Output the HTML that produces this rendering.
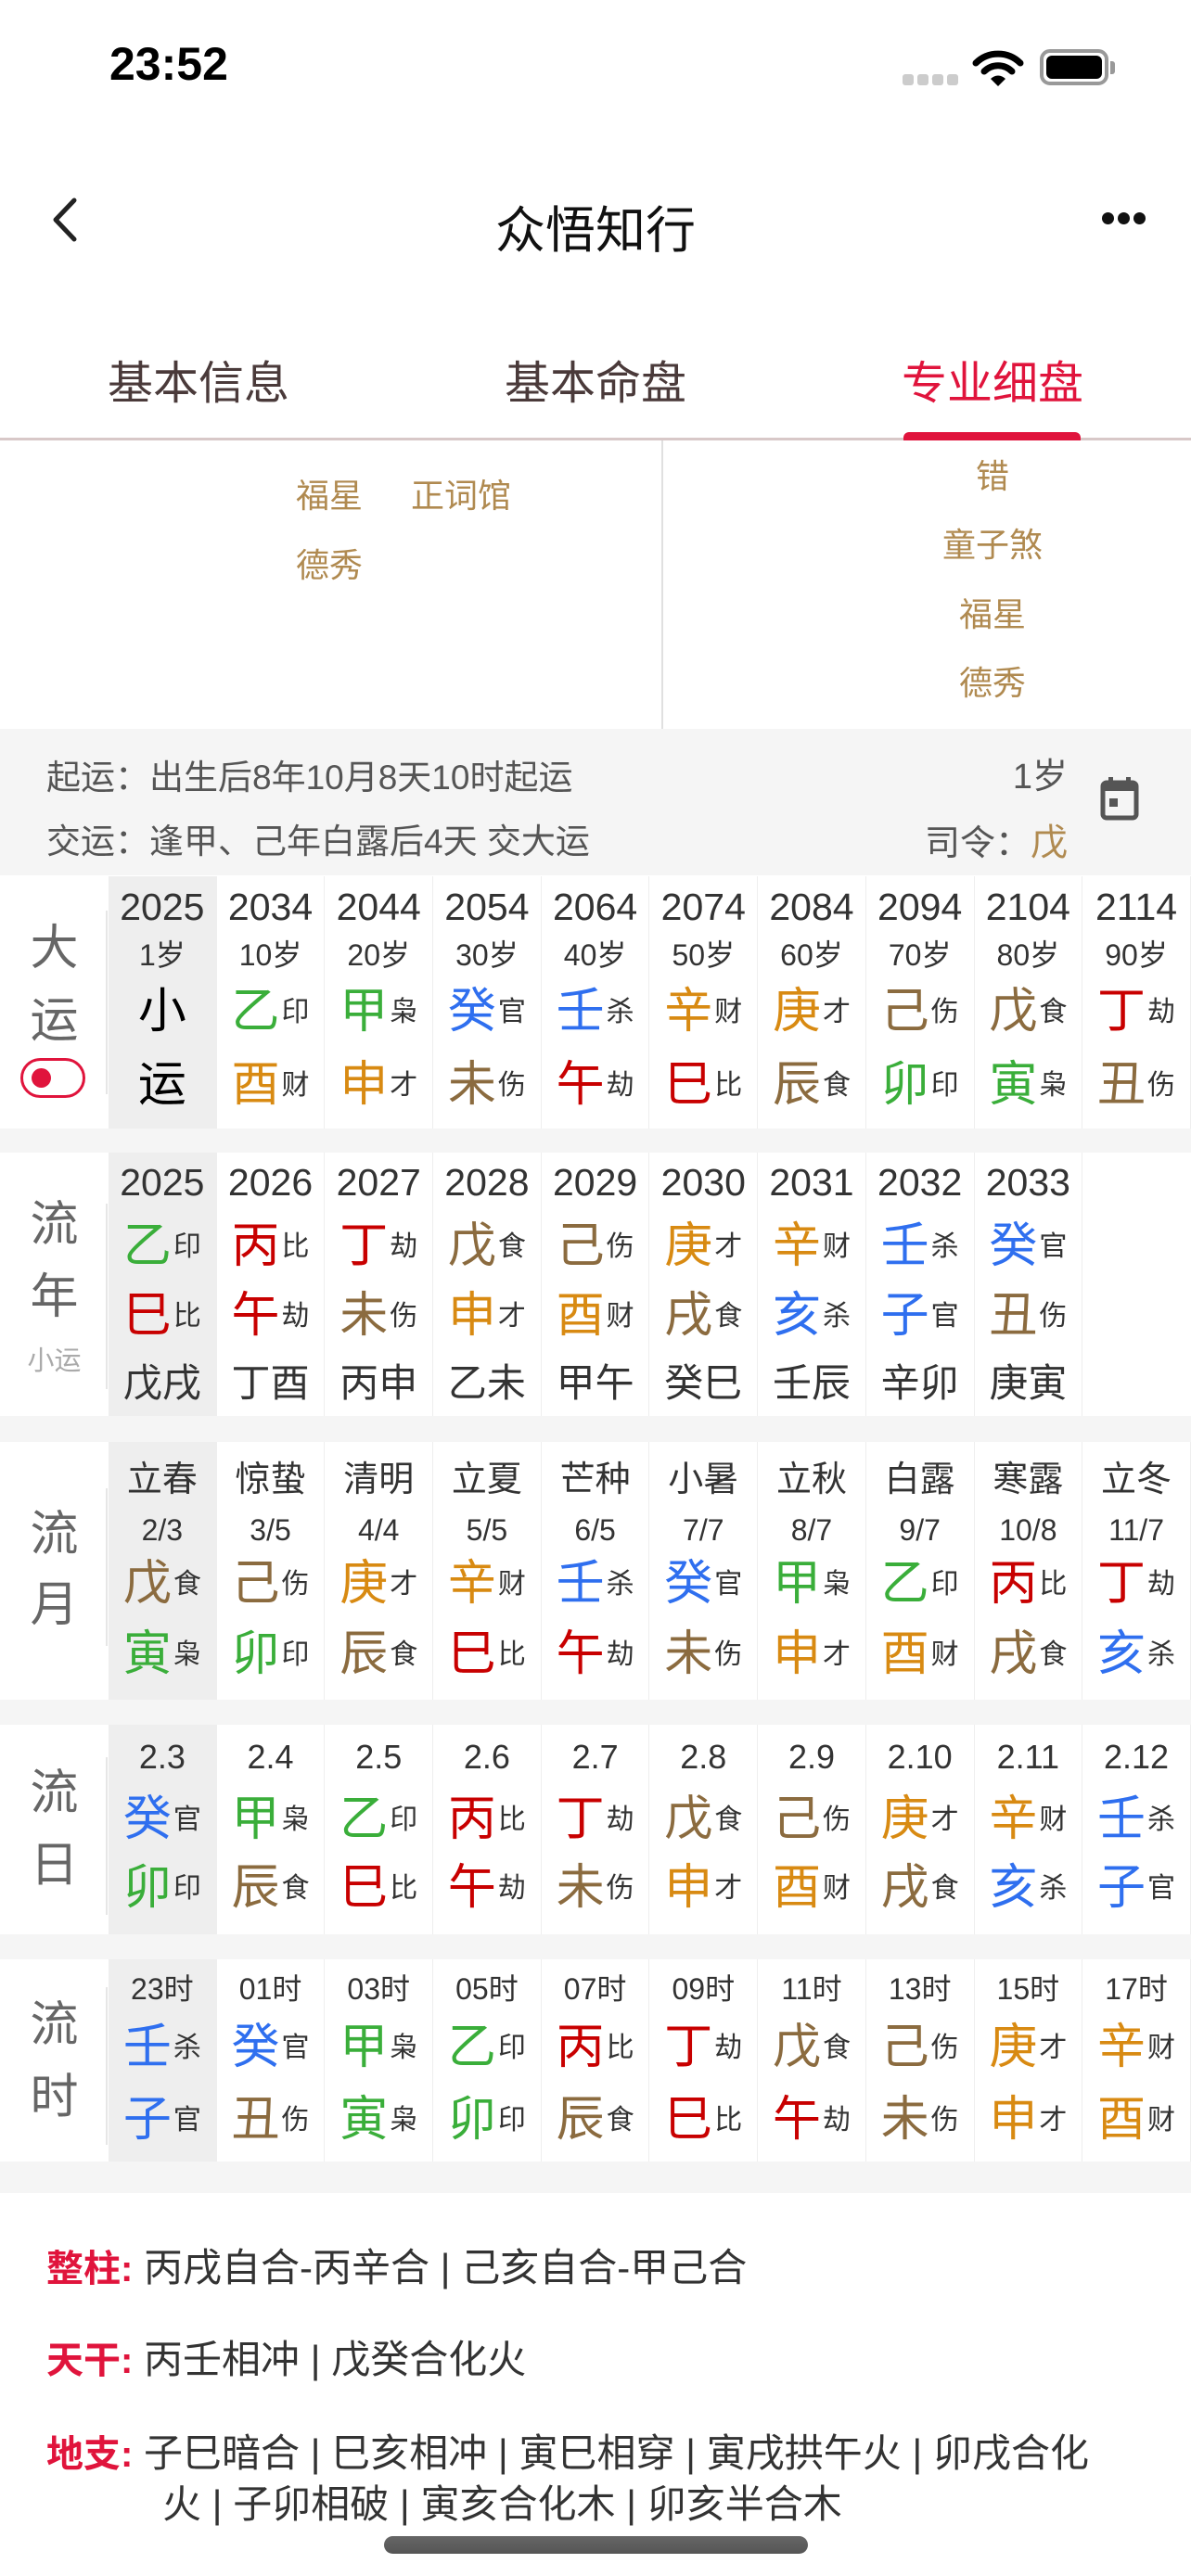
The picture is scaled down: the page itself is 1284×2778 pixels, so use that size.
<!DOCTYPE html>
<html><head><meta charset="utf-8">
<style>
*{margin:0;padding:0;box-sizing:border-box}
body{width:1284px;height:2778px;background:#fff;font-family:"Liberation Sans","Noto Sans CJK SC",sans-serif;position:relative;overflow:hidden;color:#333}
.abs{position:absolute}
.g{color:#3aae3a}.b{color:#2f6fef}.o{color:#d88a12}.n{color:#8b6b3f}.r{color:#c80000}
.blk{position:absolute;left:0;width:1284px;background:#fff}
.lab{position:absolute;left:0;width:117px;top:0;height:100%;color:#666;font-size:52px;text-align:center}
.lab .vl{position:absolute;left:114px;width:2px;background:#e6e6e6}
.cols{position:absolute;left:117px;top:0;height:100%;display:flex}
.c{width:116.7px;height:100%;border-right:1.5px solid #eee;text-align:center;white-space:nowrap;overflow:hidden}
.c > div{overflow:visible}
.c.h{background:#eee}
.y{font-size:41px;color:#333}
.a{font-size:32px;color:#333}
.s{font-size:52px}
.s small{font-size:30px;color:#333;margin-left:2px;line-height:0;position:relative;top:-7px}
.gz{font-size:42px;color:#333}
.jq{font-size:38px;color:#333}
.t{font-size:36px;color:#b08a50;position:absolute}
.gap{position:absolute;left:0;width:1284px;background:#f5f5f5}
.bt{position:absolute;left:50px;font-size:42px;line-height:50px;color:#333;white-space:nowrap}
.bt b{color:#e0143c;font-size:40px}
</style></head><body>

<!-- status bar -->
<div class="abs" style="left:118px;top:40px;font-size:50px;font-weight:bold;color:#000">23:52</div>
<div class="abs" style="left:973px;top:80px;width:12px;height:12px;border-radius:3px;background:#ccc"></div>
<div class="abs" style="left:989px;top:80px;width:12px;height:12px;border-radius:3px;background:#ccc"></div>
<div class="abs" style="left:1005px;top:80px;width:12px;height:12px;border-radius:3px;background:#ccc"></div>
<div class="abs" style="left:1021px;top:80px;width:12px;height:12px;border-radius:3px;background:#ccc"></div>
<svg class="abs" style="left:1048px;top:52px" width="56" height="42" viewBox="0 0 56 42">
<path d="M4 16 A34 34 0 0 1 52 16" fill="none" stroke="#000" stroke-width="7" stroke-linecap="round"/>
<path d="M13 25 A21 21 0 0 1 43 25" fill="none" stroke="#000" stroke-width="7" stroke-linecap="round"/>
<path d="M20 33 L28 41 L36 33 A11 11 0 0 0 20 33Z" fill="#000"/>
</svg>
<div class="abs" style="left:1121px;top:53px;width:74px;height:39px;border:4px solid #999;border-radius:11px"></div>
<div class="abs" style="left:1128px;top:60px;width:60px;height:25px;background:#000;border-radius:6px"></div>
<div class="abs" style="left:1197px;top:66px;width:5px;height:14px;background:#999;border-radius:0 3px 3px 0"></div>

<!-- nav -->
<svg class="abs" style="left:52px;top:212px" width="36" height="50" viewBox="0 0 36 50"><path d="M28 4 L8 25 L28 46" fill="none" stroke="#222" stroke-width="5" stroke-linecap="round" stroke-linejoin="round"/></svg>
<div class="abs" style="left:0;width:1284px;top:204px;text-align:center;font-size:54px;color:#111">众悟知行</div>
<div class="abs" style="left:1188px;top:229px;width:13px;height:13px;border-radius:50%;background:#111"></div>
<div class="abs" style="left:1205px;top:229px;width:13px;height:13px;border-radius:50%;background:#111"></div>
<div class="abs" style="left:1222px;top:229px;width:13px;height:13px;border-radius:50%;background:#111"></div>

<!-- tabs -->
<div class="abs" style="left:114px;width:200px;top:374px;text-align:center;font-size:49px;color:#4a3a3a">基本信息</div>
<div class="abs" style="left:542px;width:200px;top:374px;text-align:center;font-size:49px;color:#4a3a3a">基本命盘</div>
<div class="abs" style="left:970px;width:200px;top:374px;text-align:center;font-size:49px;color:#e0143c">专业细盘</div>
<div class="abs" style="left:0;top:472px;width:1284px;height:3px;background:#d8c8c8"></div>
<div class="abs" style="left:974px;top:466px;width:191px;height:9px;background:#e0143c;border-radius:6px 6px 0 0"></div>

<!-- upper -->
<div class="abs" style="left:713px;top:475px;width:2px;height:311px;background:#e0e0e0"></div>
<div class="t" style="left:319px;top:506px">福星</div>
<div class="t" style="left:443px;top:506px">正词馆</div>
<div class="t" style="left:319px;top:581px">德秀</div>
<div class="t" style="left:870px;width:400px;text-align:center;top:485px">错</div>
<div class="t" style="left:870px;width:400px;text-align:center;top:559px">童子煞</div>
<div class="t" style="left:870px;width:400px;text-align:center;top:634px">福星</div>
<div class="t" style="left:870px;width:400px;text-align:center;top:708px">德秀</div>

<!-- info -->
<div class="gap" style="top:786px;height:158px"></div>
<div class="abs" style="left:50px;top:808px;font-size:37px;color:#555">起运：出生后8年10月8天10时起运</div>
<div class="abs" style="left:50px;top:877px;font-size:37px;color:#555">交运：逢甲、己年白露后4天 交大运</div>
<div class="abs" style="left:900px;width:251px;text-align:right;top:806px;font-size:38px;color:#555">1岁</div>
<div class="abs" style="left:900px;width:251px;text-align:right;top:876px;font-size:38px;color:#555">司令：<span style="color:#b08a50;font-size:40px">戊</span></div>
<svg class="abs" style="left:1185px;top:836px" width="44" height="50" viewBox="0 0 44 50"><rect x="4" y="8" width="36" height="38" rx="4" fill="none" stroke="#555" stroke-width="5"/><rect x="4" y="8" width="36" height="9" fill="#555"/><rect x="10" y="2" width="5" height="9" fill="#555"/><rect x="29" y="2" width="5" height="9" fill="#555"/><rect x="11" y="25" width="9" height="9" fill="#555"/></svg>

<!-- 大运 -->
<div class="blk" style="top:945px;height:272px">
 <div class="lab"><div style="position:absolute;top:50px;width:117px;line-height:56px">大</div><div style="position:absolute;top:128px;width:117px;line-height:56px">运</div>
  <div style="position:absolute;left:22px;top:196px;width:70px;height:43px;border:3px solid #e0143c;border-radius:22px"><div style="position:absolute;left:9px;top:8px;width:21px;height:21px;border-radius:50%;background:#e0143c"></div></div>
  <div class="vl" style="top:37px;height:198px"></div></div>
 <div class="cols">
  <div class="c h"><div class="y" style="line-height:66px">2025</div><div class="a" style="line-height:38px">1岁</div><div class="s" style="line-height:84px;color:#000">小</div><div class="s" style="line-height:74px;color:#000">运</div></div>
  <div class="c"><div class="y" style="line-height:66px">2034</div><div class="a" style="line-height:38px">10岁</div><div class="s" style="line-height:84px"><span class="g">乙</span><small>印</small></div><div class="s" style="line-height:74px"><span class="o">酉</span><small>财</small></div></div>
  <div class="c"><div class="y" style="line-height:66px">2044</div><div class="a" style="line-height:38px">20岁</div><div class="s" style="line-height:84px"><span class="g">甲</span><small>枭</small></div><div class="s" style="line-height:74px"><span class="o">申</span><small>才</small></div></div>
  <div class="c"><div class="y" style="line-height:66px">2054</div><div class="a" style="line-height:38px">30岁</div><div class="s" style="line-height:84px"><span class="b">癸</span><small>官</small></div><div class="s" style="line-height:74px"><span class="n">未</span><small>伤</small></div></div>
  <div class="c"><div class="y" style="line-height:66px">2064</div><div class="a" style="line-height:38px">40岁</div><div class="s" style="line-height:84px"><span class="b">壬</span><small>杀</small></div><div class="s" style="line-height:74px"><span class="r">午</span><small>劫</small></div></div>
  <div class="c"><div class="y" style="line-height:66px">2074</div><div class="a" style="line-height:38px">50岁</div><div class="s" style="line-height:84px"><span class="o">辛</span><small>财</small></div><div class="s" style="line-height:74px"><span class="r">巳</span><small>比</small></div></div>
  <div class="c"><div class="y" style="line-height:66px">2084</div><div class="a" style="line-height:38px">60岁</div><div class="s" style="line-height:84px"><span class="o">庚</span><small>才</small></div><div class="s" style="line-height:74px"><span class="n">辰</span><small>食</small></div></div>
  <div class="c"><div class="y" style="line-height:66px">2094</div><div class="a" style="line-height:38px">70岁</div><div class="s" style="line-height:84px"><span class="n">己</span><small>伤</small></div><div class="s" style="line-height:74px"><span class="g">卯</span><small>印</small></div></div>
  <div class="c"><div class="y" style="line-height:66px">2104</div><div class="a" style="line-height:38px">80岁</div><div class="s" style="line-height:84px"><span class="n">戊</span><small>食</small></div><div class="s" style="line-height:74px"><span class="g">寅</span><small>枭</small></div></div>
  <div class="c"><div class="y" style="line-height:66px">2114</div><div class="a" style="line-height:38px">90岁</div><div class="s" style="line-height:84px"><span class="r">丁</span><small>劫</small></div><div class="s" style="line-height:74px"><span class="n">丑</span><small>伤</small></div></div>
 </div>
</div>
<div class="gap" style="top:1217px;height:26px"></div>

<!-- 流年 -->
<div class="blk" style="top:1243px;height:284px">
 <div class="lab"><div style="position:absolute;top:50px;width:117px;line-height:56px">流</div><div style="position:absolute;top:128px;width:117px;line-height:56px">年</div><div style="position:absolute;top:210px;width:117px;font-size:29px;color:#aaa;line-height:30px">小运</div>
  <div class="vl" style="top:55px;height:200px"></div></div>
 <div class="cols">
  <div class="c h"><div class="y" style="line-height:64px">2025</div><div class="s" style="line-height:74px"><span class="g">乙</span><small>印</small></div><div class="s" style="line-height:76px"><span class="r">巳</span><small>比</small></div><div class="gz" style="line-height:70px">戊戌</div></div>
  <div class="c"><div class="y" style="line-height:64px">2026</div><div class="s" style="line-height:74px"><span class="r">丙</span><small>比</small></div><div class="s" style="line-height:76px"><span class="r">午</span><small>劫</small></div><div class="gz" style="line-height:70px">丁酉</div></div>
  <div class="c"><div class="y" style="line-height:64px">2027</div><div class="s" style="line-height:74px"><span class="r">丁</span><small>劫</small></div><div class="s" style="line-height:76px"><span class="n">未</span><small>伤</small></div><div class="gz" style="line-height:70px">丙申</div></div>
  <div class="c"><div class="y" style="line-height:64px">2028</div><div class="s" style="line-height:74px"><span class="n">戊</span><small>食</small></div><div class="s" style="line-height:76px"><span class="o">申</span><small>才</small></div><div class="gz" style="line-height:70px">乙未</div></div>
  <div class="c"><div class="y" style="line-height:64px">2029</div><div class="s" style="line-height:74px"><span class="n">己</span><small>伤</small></div><div class="s" style="line-height:76px"><span class="o">酉</span><small>财</small></div><div class="gz" style="line-height:70px">甲午</div></div>
  <div class="c"><div class="y" style="line-height:64px">2030</div><div class="s" style="line-height:74px"><span class="o">庚</span><small>才</small></div><div class="s" style="line-height:76px"><span class="n">戌</span><small>食</small></div><div class="gz" style="line-height:70px">癸巳</div></div>
  <div class="c"><div class="y" style="line-height:64px">2031</div><div class="s" style="line-height:74px"><span class="o">辛</span><small>财</small></div><div class="s" style="line-height:76px"><span class="b">亥</span><small>杀</small></div><div class="gz" style="line-height:70px">壬辰</div></div>
  <div class="c"><div class="y" style="line-height:64px">2032</div><div class="s" style="line-height:74px"><span class="b">壬</span><small>杀</small></div><div class="s" style="line-height:76px"><span class="b">子</span><small>官</small></div><div class="gz" style="line-height:70px">辛卯</div></div>
  <div class="c"><div class="y" style="line-height:64px">2033</div><div class="s" style="line-height:74px"><span class="b">癸</span><small>官</small></div><div class="s" style="line-height:76px"><span class="n">丑</span><small>伤</small></div><div class="gz" style="line-height:70px">庚寅</div></div>
  <div class="c" style="border-right:none"></div>
 </div>
</div>
<div class="gap" style="top:1527px;height:28px"></div>

<!-- 流月 -->
<div class="blk" style="top:1555px;height:278px">
 <div class="lab"><div style="position:absolute;top:72px;width:117px;line-height:56px">流</div><div style="position:absolute;top:148px;width:117px;line-height:56px">月</div>
  <div class="vl" style="top:50px;height:170px"></div></div>
 <div class="cols">
  <div class="c h"><div class="jq" style="line-height:82px">立春</div><div class="a" style="line-height:26px">2/3</div><div class="s" style="line-height:90px"><span class="n">戊</span><small>食</small></div><div class="s" style="line-height:62px"><span class="g">寅</span><small>枭</small></div></div>
  <div class="c"><div class="jq" style="line-height:82px">惊蛰</div><div class="a" style="line-height:26px">3/5</div><div class="s" style="line-height:90px"><span class="n">己</span><small>伤</small></div><div class="s" style="line-height:62px"><span class="g">卯</span><small>印</small></div></div>
  <div class="c"><div class="jq" style="line-height:82px">清明</div><div class="a" style="line-height:26px">4/4</div><div class="s" style="line-height:90px"><span class="o">庚</span><small>才</small></div><div class="s" style="line-height:62px"><span class="n">辰</span><small>食</small></div></div>
  <div class="c"><div class="jq" style="line-height:82px">立夏</div><div class="a" style="line-height:26px">5/5</div><div class="s" style="line-height:90px"><span class="o">辛</span><small>财</small></div><div class="s" style="line-height:62px"><span class="r">巳</span><small>比</small></div></div>
  <div class="c"><div class="jq" style="line-height:82px">芒种</div><div class="a" style="line-height:26px">6/5</div><div class="s" style="line-height:90px"><span class="b">壬</span><small>杀</small></div><div class="s" style="line-height:62px"><span class="r">午</span><small>劫</small></div></div>
  <div class="c"><div class="jq" style="line-height:82px">小暑</div><div class="a" style="line-height:26px">7/7</div><div class="s" style="line-height:90px"><span class="b">癸</span><small>官</small></div><div class="s" style="line-height:62px"><span class="n">未</span><small>伤</small></div></div>
  <div class="c"><div class="jq" style="line-height:82px">立秋</div><div class="a" style="line-height:26px">8/7</div><div class="s" style="line-height:90px"><span class="g">甲</span><small>枭</small></div><div class="s" style="line-height:62px"><span class="o">申</span><small>才</small></div></div>
  <div class="c"><div class="jq" style="line-height:82px">白露</div><div class="a" style="line-height:26px">9/7</div><div class="s" style="line-height:90px"><span class="g">乙</span><small>印</small></div><div class="s" style="line-height:62px"><span class="o">酉</span><small>财</small></div></div>
  <div class="c"><div class="jq" style="line-height:82px">寒露</div><div class="a" style="line-height:26px">10/8</div><div class="s" style="line-height:90px"><span class="r">丙</span><small>比</small></div><div class="s" style="line-height:62px"><span class="n">戌</span><small>食</small></div></div>
  <div class="c"><div class="jq" style="line-height:82px">立冬</div><div class="a" style="line-height:26px">11/7</div><div class="s" style="line-height:90px"><span class="r">丁</span><small>劫</small></div><div class="s" style="line-height:62px"><span class="b">亥</span><small>杀</small></div></div>
 </div>
</div>
<div class="gap" style="top:1833px;height:27px"></div>

<!-- 流日 -->
<div class="blk" style="top:1860px;height:226px">
 <div class="lab"><div style="position:absolute;top:46px;width:117px;line-height:56px">流</div><div style="position:absolute;top:124px;width:117px;line-height:56px">日</div>
  <div class="vl" style="top:35px;height:170px"></div></div>
 <div class="cols">
  <div class="c h"><div class="y" style="line-height:70px;font-size:36px">2.3</div><div class="s" style="line-height:64px"><span class="b">癸</span><small>官</small></div><div class="s" style="line-height:84px"><span class="g">卯</span><small>印</small></div></div>
  <div class="c"><div class="y" style="line-height:70px;font-size:36px">2.4</div><div class="s" style="line-height:64px"><span class="g">甲</span><small>枭</small></div><div class="s" style="line-height:84px"><span class="n">辰</span><small>食</small></div></div>
  <div class="c"><div class="y" style="line-height:70px;font-size:36px">2.5</div><div class="s" style="line-height:64px"><span class="g">乙</span><small>印</small></div><div class="s" style="line-height:84px"><span class="r">巳</span><small>比</small></div></div>
  <div class="c"><div class="y" style="line-height:70px;font-size:36px">2.6</div><div class="s" style="line-height:64px"><span class="r">丙</span><small>比</small></div><div class="s" style="line-height:84px"><span class="r">午</span><small>劫</small></div></div>
  <div class="c"><div class="y" style="line-height:70px;font-size:36px">2.7</div><div class="s" style="line-height:64px"><span class="r">丁</span><small>劫</small></div><div class="s" style="line-height:84px"><span class="n">未</span><small>伤</small></div></div>
  <div class="c"><div class="y" style="line-height:70px;font-size:36px">2.8</div><div class="s" style="line-height:64px"><span class="n">戊</span><small>食</small></div><div class="s" style="line-height:84px"><span class="o">申</span><small>才</small></div></div>
  <div class="c"><div class="y" style="line-height:70px;font-size:36px">2.9</div><div class="s" style="line-height:64px"><span class="n">己</span><small>伤</small></div><div class="s" style="line-height:84px"><span class="o">酉</span><small>财</small></div></div>
  <div class="c"><div class="y" style="line-height:70px;font-size:36px">2.10</div><div class="s" style="line-height:64px"><span class="o">庚</span><small>才</small></div><div class="s" style="line-height:84px"><span class="n">戌</span><small>食</small></div></div>
  <div class="c"><div class="y" style="line-height:70px;font-size:36px">2.11</div><div class="s" style="line-height:64px"><span class="o">辛</span><small>财</small></div><div class="s" style="line-height:84px"><span class="b">亥</span><small>杀</small></div></div>
  <div class="c"><div class="y" style="line-height:70px;font-size:36px">2.12</div><div class="s" style="line-height:64px"><span class="b">壬</span><small>杀</small></div><div class="s" style="line-height:84px"><span class="b">子</span><small>官</small></div></div>
 </div>
</div>
<div class="gap" style="top:2086px;height:27px"></div>

<!-- 流时 -->
<div class="blk" style="top:2113px;height:218px">
 <div class="lab"><div style="position:absolute;top:43px;width:117px;line-height:56px">流</div><div style="position:absolute;top:121px;width:117px;line-height:56px">时</div>
  <div class="vl" style="top:30px;height:170px"></div></div>
 <div class="cols">
  <div class="c h"><div class="a" style="line-height:64px">23时</div><div class="s" style="line-height:62px"><span class="b">壬</span><small>杀</small></div><div class="s" style="line-height:94px"><span class="b">子</span><small>官</small></div></div>
  <div class="c"><div class="a" style="line-height:64px">01时</div><div class="s" style="line-height:62px"><span class="b">癸</span><small>官</small></div><div class="s" style="line-height:94px"><span class="n">丑</span><small>伤</small></div></div>
  <div class="c"><div class="a" style="line-height:64px">03时</div><div class="s" style="line-height:62px"><span class="g">甲</span><small>枭</small></div><div class="s" style="line-height:94px"><span class="g">寅</span><small>枭</small></div></div>
  <div class="c"><div class="a" style="line-height:64px">05时</div><div class="s" style="line-height:62px"><span class="g">乙</span><small>印</small></div><div class="s" style="line-height:94px"><span class="g">卯</span><small>印</small></div></div>
  <div class="c"><div class="a" style="line-height:64px">07时</div><div class="s" style="line-height:62px"><span class="r">丙</span><small>比</small></div><div class="s" style="line-height:94px"><span class="n">辰</span><small>食</small></div></div>
  <div class="c"><div class="a" style="line-height:64px">09时</div><div class="s" style="line-height:62px"><span class="r">丁</span><small>劫</small></div><div class="s" style="line-height:94px"><span class="r">巳</span><small>比</small></div></div>
  <div class="c"><div class="a" style="line-height:64px">11时</div><div class="s" style="line-height:62px"><span class="n">戊</span><small>食</small></div><div class="s" style="line-height:94px"><span class="r">午</span><small>劫</small></div></div>
  <div class="c"><div class="a" style="line-height:64px">13时</div><div class="s" style="line-height:62px"><span class="n">己</span><small>伤</small></div><div class="s" style="line-height:94px"><span class="n">未</span><small>伤</small></div></div>
  <div class="c"><div class="a" style="line-height:64px">15时</div><div class="s" style="line-height:62px"><span class="o">庚</span><small>才</small></div><div class="s" style="line-height:94px"><span class="o">申</span><small>才</small></div></div>
  <div class="c"><div class="a" style="line-height:64px">17时</div><div class="s" style="line-height:62px"><span class="o">辛</span><small>财</small></div><div class="s" style="line-height:94px"><span class="o">酉</span><small>财</small></div></div>
 </div>
</div>
<div class="gap" style="top:2331px;height:34px"></div>

<!-- bottom -->
<div class="bt" style="top:2421px"><b>整柱:</b> 丙戌自合-丙辛合 | 己亥自合-甲己合</div>
<div class="bt" style="top:2520px"><b>天干:</b> 丙壬相冲 | 戊癸合化火</div>
<div class="bt" style="top:2621px"><b>地支:</b> 子巳暗合 | 巳亥相冲 | 寅巳相穿 | 寅戌拱午火 | 卯戌合化</div>
<div class="bt" style="left:175px;top:2676px">火 | 子卯相破 | 寅亥合化木 | 卯亥半合木</div>
<div class="abs" style="left:414px;top:2735px;width:457px;height:19px;border-radius:10px;background:linear-gradient(#666,#555)"></div>
</body></html>
